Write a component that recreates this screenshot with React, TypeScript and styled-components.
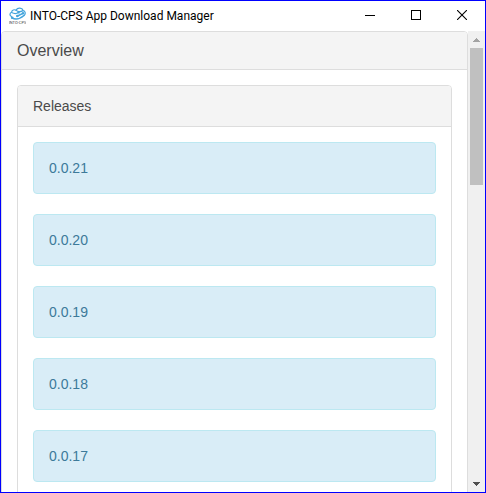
import React from "react";
import styled, { createGlobalStyle } from "styled-components";

const GlobalStyle = createGlobalStyle`
  *, *::before, *::after { box-sizing: border-box; }
  body {
    margin: 0;
    background: #fff;
    color: #333;
    font: 14px/20px "Liberation Sans", Arial, sans-serif;
  }
`;

const Window = styled.div`
  display: flex;
  flex-direction: column;
  height: 100vh;
  border: 1px solid #0000ff;
  background: #fff;
`;

const TitleBar = styled.header`
  display: flex;
  flex: none;
  align-items: center;
  height: 30px;
  padding-left: 8px;
`;

const WindowTitle = styled.h1`
  flex: 1;
  margin: 0 0 0 4px;
  overflow: hidden;
  white-space: nowrap;
  color: #000;
  font: 400 12px/16px Roboto, sans-serif;
`;

const CaptionButton = styled.button`
  display: flex;
  align-items: center;
  justify-content: center;
  width: 46px;
  height: 30px;
  padding: 0 0 2px;
  border: 0;
  background: transparent;
`;

const Viewport = styled.div`
  display: flex;
  flex: 1;
  min-height: 0;
`;

const ScrollArea = styled.main`
  flex: 1;
  min-width: 0;
  overflow-y: auto;
  scrollbar-width: none;
`;

const Panel = styled.section`
  border: 1px solid #ddd;
  border-radius: 4px;
  background: #fff;
`;

const PanelHeading = styled.div`
  padding: 10px 15px;
  border-bottom: 1px solid #ddd;
  border-radius: 3px 3px 0 0;
  background: #f4f4f4;
`;

const PanelTitle = styled.h2<{ $large?: boolean }>`
  margin: 0;
  color: #4a4a4a;
  font-size: ${(p) => (p.$large ? 16 : 14)}px;
  font-weight: 400;
  line-height: ${(p) => (p.$large ? 17 : 20)}px;
`;

const PanelBody = styled.div`
  padding: 15px;
`;

const ReleaseList = styled.ul`
  margin: 0;
  padding: 0;
  list-style: none;
`;

const Release = styled.li`
  margin-bottom: 20px;
  padding: 15px;
  border: 1px solid #bce8f1;
  border-radius: 4px;
  background: #d9edf7;
  color: #3c7a9a;
`;

const ScrollBar = styled.div`
  display: flex;
  flex: none;
  flex-direction: column;
  width: 17px;
  background: #f0f0f0;
`;

const ScrollButton = styled.button`
  display: flex;
  align-items: center;
  justify-content: center;
  height: 17px;
  padding: 0;
  border: 0;
  background: transparent;
`;

const ScrollTrack = styled.div`
  flex: 1;
  padding: 0 2px;
`;

const ScrollThumb = styled.div`
  height: 32%;
  background: #c0c0c0;
`;

const AppIcon = () => (
  <svg width="17" height="18" viewBox="0 0 17 18" aria-hidden="true">
    <g fill="none" stroke="#45a5dc" strokeLinecap="round" strokeLinejoin="round">
      <path d="M2.5 9.5C.3 8.6.6 6.1 2.6 5.3 2.8 3 5.4 2.2 7 3.2 8.5.2 13.2.4 14.2 3.6 16.4 3.8 17 7 15 8.4" strokeWidth="1.2" />
      <path d="M2.6 5.5C5 6.8 7.5 7 9.5 5.4M7 3.2C8.5 4.8 11 5.2 14 3.6" strokeWidth="1.2" />
      <path d="M3 10.8C6 12.8 10 12.6 15 8.5M8.5 9 14 6.4" strokeWidth="1.6" />
    </g>
    <g fill="#45a5dc">
      <circle cx="9.6" cy="5.4" r="1.2" />
      <circle cx="14" cy="6.3" r="1.2" />
      <circle cx="8.3" cy="9" r="1.3" />
      <circle cx="3.2" cy="10.8" r="1.3" />
    </g>
    <text x="8.5" y="17" textAnchor="middle" fill="#444" fontFamily="Roboto, sans-serif" fontSize="4">
      INTO-CPS
    </text>
  </svg>
);

const releases = ["0.0.21", "0.0.20", "0.0.19", "0.0.18", "0.0.17"];

export default function App() {
  return (
    <>
      <GlobalStyle />
      <Window>
        <TitleBar>
          <AppIcon />
          <WindowTitle>INTO-CPS App Download Manager</WindowTitle>
          <CaptionButton type="button" aria-label="Minimize">
            <svg width="10" height="10" viewBox="0 0 10 10" shapeRendering="crispEdges">
              <path d="M0 5.5h10" stroke="#000" />
            </svg>
          </CaptionButton>
          <CaptionButton type="button" aria-label="Maximize">
            <svg width="10" height="10" viewBox="0 0 10 10" shapeRendering="crispEdges">
              <path d="M.5.5h9v9h-9z" fill="none" stroke="#000" />
            </svg>
          </CaptionButton>
          <CaptionButton type="button" aria-label="Close">
            <svg width="10" height="10" viewBox="0 0 10 10">
              <path d="M0 0l10 10M10 0L0 10" stroke="#000" strokeWidth="1.1" />
            </svg>
          </CaptionButton>
        </TitleBar>
        <Viewport>
          <ScrollArea>
            <Panel>
              <PanelHeading>
                <PanelTitle $large>Overview</PanelTitle>
              </PanelHeading>
              <PanelBody>
                <Panel>
                  <PanelHeading>
                    <PanelTitle>Releases</PanelTitle>
                  </PanelHeading>
                  <PanelBody>
                    <ReleaseList>
                      {releases.map((version) => (
                        <Release key={version}>{version}</Release>
                      ))}
                    </ReleaseList>
                  </PanelBody>
                </Panel>
              </PanelBody>
            </Panel>
          </ScrollArea>
          <ScrollBar>
            <ScrollButton type="button" aria-label="Scroll up">
              <svg width="7" height="4" viewBox="0 0 7 4" shapeRendering="crispEdges">
                <path d="M3 0h1v1h1v1h1v1h1v1H0V3h1V2h1V1h1z" fill="#a3a3a3" />
              </svg>
            </ScrollButton>
            <ScrollTrack>
              <ScrollThumb />
            </ScrollTrack>
            <ScrollButton type="button" aria-label="Scroll down">
              <svg width="7" height="4" viewBox="0 0 7 4" shapeRendering="crispEdges">
                <path d="M0 0h7v1H6v1H5v1H4v1H3V3H2V2H1V1H0z" fill="#505050" />
              </svg>
            </ScrollButton>
          </ScrollBar>
        </Viewport>
      </Window>
    </>
  );
}
